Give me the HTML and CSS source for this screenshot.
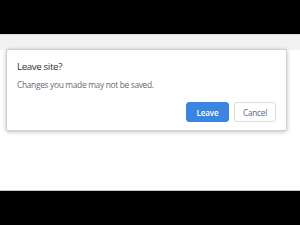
FILE: index.html
```html
<!DOCTYPE html>
<html lang="en">
<head>
    <meta charset="UTF-8">
    <meta name="viewport" content="width=device-width, initial-scale=1.0">
    <title>Leave site?</title>
    <link rel="stylesheet" href="styles.css">
</head>
<body>
    <div class="letterbox top"></div>

    <div class="browser">
        <div class="toolbar"></div>
        <div class="page"></div>

        <div class="dialog">
            <h1 class="dialog-title">Leave site?</h1>
            <p class="dialog-text">Changes you made may not be saved.</p>
            <div class="dialog-actions">
                <button class="btn btn-primary">Leave</button>
                <button class="btn btn-cancel">Cancel</button>
            </div>
        </div>
    </div>

    <div class="letterbox bottom"></div>
</body>
</html>
```

FILE: styles.css
```css
html, body {
    margin: 0;
    padding: 0;
}
body {
    width: 300px;
    height: 225px;
    background-color: #000;
    font-family: "Open Sans", "Noto Sans", Arial, sans-serif;
    overflow: hidden;
}
.letterbox.top {
    height: 34px;
}
.letterbox.bottom {
    height: 35px;
    border-top: 1px solid #c8c8c8;
    box-sizing: border-box;
}
.browser {
    position: relative;
    height: 156px;
    background-color: #fff;
    display: flex;
    flex-direction: column;
}
.toolbar {
    height: 16px;
    background-color: #f1f2f4;
    border-top: 1px solid #dcdcdc;
    box-sizing: border-box;
}
.page {
    flex: 1;
    background-color: #fff;
}
.dialog {
    position: absolute;
    left: 6px;
    top: 15px;
    width: 281px;
    height: 82px;
    box-sizing: border-box;
    background: #fff;
    border: 1px solid #cfcfcf;
    border-radius: 2px;
    box-shadow: 0 1px 4px rgba(0,0,0,0.25);
    padding: 10px 10px 0 10px;
}
.dialog-title {
    margin: 0;
    font-size: 9.8px;
    font-weight: normal;
    letter-spacing: -0.4px;
    color: #333;
    line-height: 14px;
}
.dialog-text {
    margin: 5px 0 0 0;
    font-size: 8.4px;
    letter-spacing: -0.32px;
    color: #666a70;
    line-height: 12px;
}
.dialog-actions {
    display: flex;
    justify-content: flex-end;
    gap: 5px;
    margin-top: 11px;
}
.btn {
    height: 20px;
    padding: 0;
    border-radius: 3px;
    font-family: inherit;
    font-size: 8.2px;
    letter-spacing: -0.2px;
    cursor: pointer;
}
.btn-primary {
    width: 43px;
    background-color: #3a84e2;
    border: 1px solid #3a84e2;
    color: #fff;
    font-weight: 600;
}
.btn-cancel {
    width: 42px;
    background-color: #fff;
    border: 1px solid #dadce0;
    color: #55698a;
}
```
